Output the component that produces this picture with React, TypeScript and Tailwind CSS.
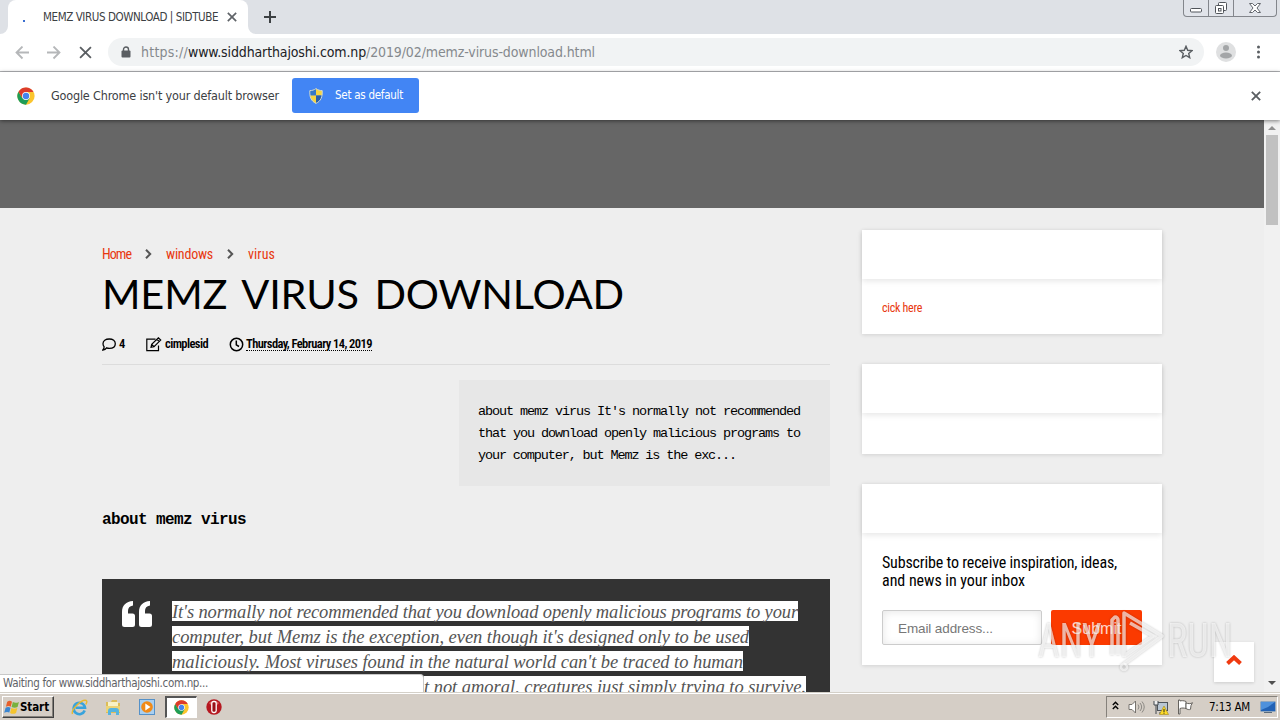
import { useLayoutEffect, useRef, type ReactNode } from "react"
import clsx from "clsx"

const UI = "font-['DejaVu_Sans_Condensed','DejaVu_Sans',sans-serif] font-stretch-condensed"
const COND = "font-['Roboto',sans-serif]"

type FitProps = {
  w: number
  className?: string
  children: ReactNode
}

// Spreads the letter spacing so a line takes exactly w pixels
function Fit({ w, className, children }: FitProps) {
  const ref = useRef<HTMLSpanElement>(null)

  useLayoutEffect(() => {
    const el = ref.current
    if (!el) return
    el.style.letterSpacing = "0px"
    const count = el.textContent?.length || 1
    const natural = el.getBoundingClientRect().width
    el.style.letterSpacing = `${(w - natural) / count}px`
  }, [w])

  return (
    <span ref={ref} className={clsx("inline-block shrink-0 whitespace-nowrap", className)}>
      {children}
    </span>
  )
}

function Cross({ size, color, stroke = 1.8 }: { size: number; color: string; stroke?: number }) {
  return (
    <svg width={size} height={size} viewBox="0 0 12 12" fill="none" stroke={color} strokeWidth={stroke}>
      <path d="M1 1l10 10M11 1L1 11" />
    </svg>
  )
}

function ChromeLogo({ size }: { size: number }) {
  return (
    <svg width={size} height={size} viewBox="0 0 48 48">
      <circle cx="24" cy="24" r="23" fill="#fbc52e" />
      <path d="M4 12.5A23 23 0 0 0 24 47L34 29.5 24 24 14 29.5z" fill="#1f9d57" />
      <path d="M4 12.5L14 29.5 24 13H44A23 23 0 0 0 4 12.5z" fill="#dc3b2c" />
      <circle cx="24" cy="24" r="10.5" fill="#fff" />
      <circle cx="24" cy="24" r="8.5" fill="#4584ee" />
    </svg>
  )
}

function TabStrip() {
  return (
    <div className="flex h-[34px] bg-[#dee1e6]">
      <div className="relative ml-2 flex h-[34px] w-[240px] items-center rounded-t-lg bg-white">
        <svg className="absolute -left-2 bottom-0" width="8" height="8">
          <path d="M8 0v8H0a8 8 0 0 0 8-8z" fill="#fff" />
        </svg>
        <svg className="absolute -right-2 bottom-0" width="8" height="8">
          <path d="M0 0v8h8a8 8 0 0 1-8-8z" fill="#fff" />
        </svg>
        <span className="mt-2 ml-[15px] h-[2px] w-[2px] bg-[#3b6fd0]" />
        <Fit w={175} className="mt-px ml-[18px] text-[11.5px] text-[#3c4043]">
          MEMZ VIRUS DOWNLOAD | SIDTUBE
        </Fit>
        <span className="ml-[9px]">
          <Cross size={10} color="#5f6368" stroke={2} />
        </span>
      </div>
      <svg className="mt-[11px] ml-4" width="12" height="12" stroke="#3c4043" strokeWidth="2">
        <path d="M6 0v12M0 6h12" />
      </svg>
      <div className="mr-[3px] ml-auto flex h-[17px] w-[94px] rounded-b-[4px] border border-t-0 border-[#83868c] bg-[#e1e4ea]">
        <div className="flex w-[25px] justify-center border-r border-[#83868c]">
          <svg width="14" height="16" fill="#fff" stroke="#50545a">
            <rect x="1.5" y="8.5" width="11" height="3.5" rx="1" />
          </svg>
        </div>
        <div className="flex w-[25px] justify-center border-r border-[#83868c]">
          <svg width="14" height="16" fill="#fff" stroke="#50545a">
            <rect x="4.5" y="2.5" width="8" height="8" rx="1" />
            <rect x="1.5" y="5.5" width="8" height="8" rx="1" />
            <rect x="4.5" y="8.5" width="2.5" height="2.5" />
          </svg>
        </div>
        <div className="flex flex-1 justify-center">
          <svg width="14" height="16" fill="#fff" stroke="#63676d">
            <path d="M1.5 3.5h3L7 6l2.500-2.500h3L9 8l3.500 4.500h-3L7 10l-2.500 2.500h-3L5 8z" />
          </svg>
        </div>
      </div>
    </div>
  )
}

function Toolbar() {
  return (
    <div className="flex h-[38px] items-center border-b border-[#b4b6b9] bg-white">
      <svg className="ml-[15px]" width="14" height="14" fill="none" stroke="#b5b7b9" strokeWidth="1.8">
        <path d="M14 6.500H1.500M7.500 .5L1.500 6.500l6 6" />
      </svg>
      <svg className="ml-[18px]" width="14" height="14" fill="none" stroke="#b5b7b9" strokeWidth="1.8">
        <path d="M0 6.500h12.500M6.500 .5l6 6-6 6" />
      </svg>
      <span className="-mt-px ml-[18px]">
        <Cross size={13} color="#5a5e62" stroke={1.7} />
      </span>
      <div className="-mt-px ml-4 flex h-7 w-[1096px] items-center rounded-full bg-[#f1f3f4]">
        <svg className="ml-[13px]" width="10" height="12" viewBox="0 0 10 12">
          <path d="M2.500 5V3.500a2.500 2.500 0 0 1 5 0V5" fill="none" stroke="#5a5e62" strokeWidth="1.4" />
          <rect x="0.5" y="4.5" width="9" height="7" rx="1" fill="#5a5e62" />
        </svg>
        <span className="ml-[10px] flex text-[14px] text-[#85898d]">
          <Fit w={47}>https://</Fit>
          <Fit w={178} className="text-[#202124]">www.siddharthajoshi.com.np</Fit>
          <Fit w={229}>/2019/02/memz-virus-download.html</Fit>
        </span>
        <svg className="mr-[11px] ml-auto" width="14" height="14" viewBox="0 0 14 14" fill="none" stroke="#5a5e62" strokeWidth="1.4">
          <path d="M7 1.300l1.700 4 4.300.4-3.300 2.800 1 4.200L7 10.500l-3.700 2.200 1-4.200L1 5.700l4.300-.4z" />
        </svg>
      </div>
      <svg className="-mt-px ml-3" width="20" height="20">
        <circle cx="10" cy="10" r="10" fill="#dfe0e1" />
        <circle cx="10" cy="6" r="3" fill="#a3a5a7" />
        <ellipse cx="10" cy="13.500" rx="6" ry="3" fill="#a3a5a7" />
      </svg>
      <svg className="-mt-px ml-[20px]" width="4" height="14" fill="#5a5e62">
        <circle cx="2.500" cy="2" r="1.500" />
        <circle cx="2.500" cy="7" r="1.500" />
        <circle cx="2.500" cy="12" r="1.500" />
      </svg>
    </div>
  )
}

function InfoBar() {
  return (
    <div className="relative flex h-12 items-center bg-white shadow-[0_1px_4px_rgba(0,0,0,0.5)]">
      <span className="ml-[17px]">
        <ChromeLogo size={18} />
      </span>
      <Fit w={228} className="ml-4 text-[12.5px] text-[#3c4043]">
        Google Chrome isn't your default browser
      </Fit>
      <button className="-mt-px ml-[13px] flex h-[35px] w-[127px] items-center rounded-[3px] bg-[#4285f4]">
        <svg className="ml-[17px]" width="14" height="16" viewBox="0 0 14 16">
          <path d="M7 .5C5 2 3 2.500.7 2.500.6 5 .6 6 .9 7.500H7z" fill="#3579c8" />
          <path d="M7 .5c2 1.500 4 2 6.300 2 .1 2.500.1 3.500-.2 5H7z" fill="#f5d542" />
          <path d="M.9 7.500H7v8C3 13.500 1.500 11 .9 7.500z" fill="#f5d542" />
          <path d="M7 7.500h6.100C12.500 11 11 13.500 7 15.500z" fill="#2a5fa8" />
          <path d="M7 .6C5 2 3 2.600.8 2.600.5 9 2 13 7 15.400c5-2.400 6.500-6.400 6.200-12.800C11 2.600 9 2 7 .6z" fill="none" stroke="#ced8d2" />
        </svg>
        <Fit w={68} className="mt-px ml-3 text-[11.5px] text-white">Set as default</Fit>
      </button>
      <span className="mr-[19px] ml-auto">
        <Cross size={10} color="#5a5e62" stroke={2.2} />
      </span>
    </div>
  )
}

function Chevron({ className }: { className: string }) {
  return (
    <svg className={className} width="10" height="10" fill="none" stroke="#555" strokeWidth="2">
      <path d="M3 .8L7.200 5 3 9.200" />
    </svg>
  )
}

function Crumbs() {
  return (
    <div className={clsx("flex h-5 items-center text-[14px] text-[#e8380f]", COND)}>
      <Fit w={29}>Home</Fit>
      <Chevron className="mr-[13px] ml-3" />
      <Fit w={47}>windows</Fit>
      <Chevron className="mr-[13px] ml-3" />
      <Fit w={27}>virus</Fit>
    </div>
  )
}

function Meta() {
  return (
    <div className={clsx("flex h-5 items-center text-[12.5px] font-semibold text-black", COND)}>
      <svg width="14" height="13" viewBox="0 0 14 13" fill="none" stroke="#000" strokeWidth="1.3">
        <path d="M7.300 1C11 1 13.300 3 13.300 5.700S11 10.300 7.300 10.300c-1 0-2-.2-2.700-.5C3.800 11 2.500 11.800.8 12c1-1 1.400-2 1.300-3.300C1.300 7.800 1 6.800 1 5.700 1 3 3.600 1 7.300 1z" />
      </svg>
      <Fit w={6} className="ml-[3px]">4</Fit>
      <svg className="ml-[21px]" width="16" height="15" viewBox="0 0 16 15" fill="none" stroke="#000" strokeWidth="1.2">
        <path d="M9.500 2.200H.8v11.500h11.700V8.500" />
        <path d="M5 10.300l.7-3L12.400.8l2.300 2.300L8 9.600zM5.700 7.300L8 9.600M11 2.300l2.200 2.200" />
      </svg>
      <Fit w={43} className="ml-[3px]">cimplesid</Fit>
      <svg className="ml-[21px]" width="15" height="15" viewBox="0 0 15 15" fill="none" stroke="#000" strokeWidth="1.5">
        <circle cx="7.500" cy="7.500" r="6.200" />
        <path d="M7.300 3.500v4.300l2.700 1.700" />
      </svg>
      <Fit w={126} className="ml-[2px] h-[14px] border-b border-dotted border-black leading-[14px]">
        Thursday, February 14, 2019
      </Fit>
    </div>
  )
}

const quoteLines = [
  { text: "It's normally not recommended that you download openly malicious programs to your", w: 626 },
  { text: "computer, but Memz is the exception, even though it's designed only to be used", w: 577 },
  { text: "maliciously. Most viruses found in the natural world can't be traced to human", w: 571 },
]

function Article() {
  return (
    <main className="ml-[102px] flex w-[728px] flex-col pt-9">
      <Crumbs />
      <h1 className="mt-1 h-[50px] font-['Lato',sans-serif] text-[41.5px] leading-[50px] text-black">
        <Fit w={522} className="[word-spacing:5px]">MEMZ VIRUS DOWNLOAD</Fit>
      </h1>
      <div className="mt-4 h-[31px] border-b border-[#dcdcdc]">
        <Meta />
      </div>
      <div className="mt-[15px] ml-auto flex h-[106px] w-[371px] flex-col bg-[#e7e7e7] pt-[21px] pl-[19px] font-['Liberation_Mono',monospace] text-[13.5px] leading-[22px] text-black">
        <Fit w={322} className="self-start">about memz virus It's normally not recommended</Fit>
        <Fit w={322} className="self-start">that you download openly malicious programs to</Fit>
        <Fit w={258} className="self-start">your computer, but Memz is the exc...</Fit>
      </div>
      <h3 className="mt-[22px] h-6 font-['Liberation_Mono',monospace] text-[16px] leading-6 font-bold text-black">
        <Fit w={144}>about memz virus</Fit>
      </h3>
      <blockquote className="mt-[47px] flex h-[113px] shrink-0 overflow-hidden bg-[#333]">
        <svg className="mt-[22px] ml-5" width="30" height="26" viewBox="0 0 30 26" fill="#fff">
          <path d="M11 0v4.500C7.500 5 6 7 6 10v2.500h4.500a2.500 2.500 0 0 1 2.500 2.500v8.500a2.500 2.500 0 0 1-2.500 2.500h-8A2.500 2.500 0 0 1 0 23.500V11C0 4.500 4 .5 11 0z" />
          <path d="M28 0v4.500C24.500 5 23 7 23 10v2.500h4.500A2.500 2.500 0 0 1 30 15v8.500a2.500 2.500 0 0 1-2.500 2.500h-8a2.500 2.500 0 0 1-2.500-2.500V11C17 4.500 21 .5 28 0z" />
        </svg>
        <div className="ml-5 flex flex-col items-start gap-[5px] pt-[22px] font-['Liberation_Serif',serif] text-[18.5px] leading-[22px] text-[#555] italic">
          {quoteLines.map((line) => (
            <Fit key={line.text} w={line.w} className="h-5 bg-white">{line.text}</Fit>
          ))}
          <Fit w={382} className="ml-[252px] h-5 bg-white">
            t not amoral, creatures just simply trying to survive.
          </Fit>
        </div>
      </blockquote>
    </main>
  )
}

function Widget({ className, children }: { className?: string; children?: ReactNode }) {
  return (
    <section className={clsx("bg-white shadow-[0_1px_4px_rgba(0,0,0,0.12)]", className)}>
      <div className="h-[49px] shadow-[0_2px_6px_rgba(0,0,0,0.1)]" />
      {children}
    </section>
  )
}

function Sidebar() {
  return (
    <aside className={clsx("ml-8 flex w-[300px] flex-col gap-[30px] pt-[22px]", COND)}>
      <Widget className="h-[104px]">
        <Fit w={40} className="mt-[21px] ml-5 text-[12px] leading-4 text-[#e8380f]">cick here</Fit>
      </Widget>
      <Widget className="h-[90px]" />
      <Widget className="h-[181px]">
        <div className="mt-[21px] ml-5 flex flex-col items-start text-[16px] leading-[18px] text-black">
          <Fit w={235}>Subscribe to receive inspiration, ideas,</Fit>
          <Fit w={143}>and news in your inbox</Fit>
        </div>
        <div className="mt-5 ml-5 flex gap-[9px] font-['Liberation_Sans',sans-serif]">
          <div className="flex h-[35px] w-40 items-center rounded-[2px] border border-[#ccc] bg-white pt-[3px] pl-[15px] text-[13.5px] text-[#777] shadow-[inset_0_1px_8px_rgba(0,0,0,0.1)]">
            <Fit w={95}>Email address...</Fit>
          </div>
          <button className="flex h-[35px] w-[91px] items-center justify-center rounded-[2px] bg-[#fb3a00] pt-[2px] text-[16px] text-white/80">
            <Fit w={50}>Submit</Fit>
          </button>
        </div>
      </Widget>
    </aside>
  )
}

function Scrollbar() {
  return (
    <div className="flex w-4 flex-col items-center bg-[#f1f1f1]">
      <svg className="mt-[6px]" width="8" height="4" fill="#8f8f8f">
        <path d="M0 4l4-4 4 4z" />
      </svg>
      <div className="mt-[5px] h-[90px] w-3 bg-[#c1c1c1]" />
      <svg className="mt-auto mb-[7px]" width="8" height="4" fill="#505050">
        <path d="M0 0l4 4 4-4z" />
      </svg>
    </div>
  )
}

function Watermark() {
  return (
    <div className="pointer-events-none absolute top-[489px] left-[1038px] flex h-16 w-[200px] font-['Roboto',sans-serif] text-[49px] leading-[64px] font-normal text-white/65 [filter:drop-shadow(0_0_1px_rgba(0,0,0,0.35))]">
      <span className="w-[69px] shrink-0">
        <span className="inline-block origin-left scale-x-[0.76]">ANY</span>
      </span>
      <svg className="shrink-0 overflow-visible" width="60" height="64" fill="none" stroke="#fff" strokeOpacity="0.65" strokeWidth="3.5" strokeLinejoin="round">
        <path d="M11 46V11a3 3 0 0 0-3-3L5 11v35" />
        <path d="M17 48V4l38 23-38 28M23 14l23 13-29 20" />
        <circle cx="17" cy="58" r="3" strokeWidth="2.5" />
      </svg>
      <span className="w-[66px] shrink-0">
        <span className="inline-block origin-left scale-x-[0.78]">RUN</span>
      </span>
    </div>
  )
}

function Page() {
  return (
    <div className="relative flex h-[572px] overflow-hidden">
      <div className="w-[1264px] bg-[#eee]">
        <div className="h-[88px] bg-[#666]" />
        <div className="flex items-start">
          <Article />
          <Sidebar />
        </div>
      </div>
      <Scrollbar />
      <div className="absolute top-[522px] left-[1214px] flex h-10 w-10 items-center justify-center bg-white shadow-[0_1px_3px_rgba(0,0,0,0.15)]">
        <svg className="-mt-1" width="16" height="10" fill="none" stroke="#f03a10" strokeWidth="4">
          <path d="M1.500 8.500L8 2.500l6.500 6" />
        </svg>
      </div>
      <Watermark />
      <div className="absolute bottom-0 left-0 flex h-[18px] w-[424px] items-center rounded-tr-[4px] border-t border-r border-[#c8c8c8] bg-white pl-[3px] text-[#5f6368]">
        <Fit w={205} className="mt-px text-[11.5px]">Waiting for www.siddharthajoshi.com.np...</Fit>
      </div>
    </div>
  )
}

function Taskbar() {
  return (
    <div className="flex h-7 items-start border-t border-[#d4d0c8] bg-[#d5cec6] pt-[3px] text-black shadow-[inset_0_1px_0_#fff]">
      <button className="ml-[2px] flex h-[22px] w-[52px] items-center border border-t-white border-r-[#404040] border-b-[#404040] border-l-white bg-[#d5cec6] shadow-[inset_-1px_-1px_0_#85817b]">
        <svg className="ml-px" width="16" height="15" viewBox="0 0 15 14">
          <path d="M3 1.500C5 .3 6.300.7 7.500 1.500L6.300 6.200C5 5.400 3.700 5.300 1.800 6.300z" fill="#e7602c" />
          <path d="M8.300 1.900c2 1 3.500 1 5.700-.1l-1.300 4.700c-1.800 1-3.700 1-5.600 0z" fill="#78b13f" />
          <path d="M1.500 7.200c1.700-1 3.300-.8 4.600 0L5 11.800C3.500 11 2 11 .2 12z" fill="#3b86d1" />
          <path d="M6.900 7.500c1.800 1 3.700 1 5.600 0l-1.200 4.600c-2 1.200-4 1-5.600 0z" fill="#f4c42e" />
        </svg>
        <Fit w={29} className="mt-px text-[11.5px] font-bold">Start</Fit>
      </button>
      <svg className="mt-[3px] ml-[17px]" width="17" height="17" viewBox="0 0 17 17" fill="none">
        <path d="M13.700 11.500A5.700 5.700 0 1 1 14 8.700H4.500" stroke="#38a3dc" strokeWidth="2.6" />
        <path d="M1.500 15C-.5 11 11-.5 15.300 1.500c1 .6.500 2.500-.6 4" stroke="#e8b92f" strokeWidth="1.4" />
      </svg>
      <svg className="mt-[3px] ml-[17px]" width="17" height="17" viewBox="0 0 17 17">
        <path d="M1 3h5l1-2h5v3h3v10H1z" fill="#dcbd58" />
        <path d="M3 3h10v5H3z" fill="#f8f2c5" />
        <path d="M1 7h14v6H1z" fill="#ecd477" />
        <path d="M3 16v-4c0-2 1-3 3-3h5c2 0 3 1 3 3v4h-3v-3H6v3z" fill="#55b4df" />
      </svg>
      <svg className="mt-[3px] ml-[17px]" width="16" height="17" viewBox="0 0 16 17">
        <rect x=".5" y=".5" width="15" height="15" fill="#a9cff0" stroke="#5591c8" />
        <circle cx="8" cy="8" r="5.800" fill="#f18a17" />
        <path d="M6.300 4.500L11.500 8l-5.200 3.500z" fill="#fff" />
      </svg>
      <div className="ml-[10px] flex h-[22px] w-8 items-center justify-center border border-t-2 border-l-2 border-[#fff] border-t-[#555] border-l-[#555] bg-white">
        <ChromeLogo size={15} />
      </div>
      <svg className="mt-[3px] ml-[9px]" width="16" height="16" viewBox="0 0 16 16">
        <circle cx="8" cy="8" r="7.700" fill="#b61820" />
        <path d="M3 4a7 7 0 0 1 10 0L10 7H6z" fill="#df6463" />
        <rect x="5.800" y="2.500" width="4.400" height="11" rx="1.800" fill="#981017" stroke="#fff" strokeWidth="1.3" />
      </svg>
      <div className="mr-[2px] ml-auto flex h-[22px] w-[172px] items-center border border-t-[#85817b] border-r-white border-b-white border-l-[#85817b]">
        <svg className="-mt-[3px] ml-[5px]" width="7" height="9" fill="none" stroke="#000" strokeWidth="1.4">
          <path d="M.8 4l2.700-2.700L6.200 4M.8 8l2.700-2.700L6.200 8" />
        </svg>
        <svg className="ml-[9px]" width="17" height="14" viewBox="0 0 17 14" fill="none" stroke="#77736e">
          <path d="M1 4.500h3L7.500 1v12L4 9.500H1z" fill="#fff" />
          <path d="M10 4.500q2 2.500 0 5M12 3q3.300 4 0 8M14 1.500q4.500 5.500 0 11" stroke="#8c8984" />
        </svg>
        <svg className="ml-2" width="16" height="15" viewBox="0 0 16 15">
          <rect x="4.500" y="2.500" width="10" height="8" fill="#b9c6d3" stroke="#4d5359" />
          <path d="M1 1v4h4V1M3 5v9M6 13h4" stroke="#42484e" fill="#eee" />
          <path d="M11 6l4.500 8.500h-9z" fill="#fddb28" stroke="#a38715" strokeWidth=".6" />
          <path d="M11 9v3M11 12.700v1" stroke="#222" />
        </svg>
        <svg className="ml-[8px]" width="17" height="16" viewBox="0 0 17 16" fill="#fff" stroke="#65625e">
          <path d="M1.500 1v14h1.500V9.500c2-.8 4-.5 6 0V2.500C7 1.500 4 1.500 3 2V1z" />
          <path d="M9 4c2 .8 4.500 1 6.500-.3L14 6.500l-.5 3.800C12 11 10.500 10.500 9 9.500z" />
        </svg>
        <Fit w={41} className="mt-px ml-[15px] text-[11.5px]">7:13 AM</Fit>
        <svg className="ml-[10px]" width="16" height="14" viewBox="0 0 16 14">
          <rect x=".5" y="1.500" width="15" height="10" rx="1" fill="#2262b5" stroke="#91a7bd" />
          <path d="M1 2h14L8 7 1 10z" fill="#4e91dc" />
          <path d="M4 12.500h8" stroke="#5a6b7c" />
        </svg>
      </div>
    </div>
  )
}

export default function App() {
  return (
    <div className={clsx("flex h-[720px] w-[1280px] flex-col overflow-hidden bg-white", UI)}>
      <TabStrip />
      <Toolbar />
      <div className="relative z-10">
        <InfoBar />
      </div>
      <Page />
      <Taskbar />
    </div>
  )
}
